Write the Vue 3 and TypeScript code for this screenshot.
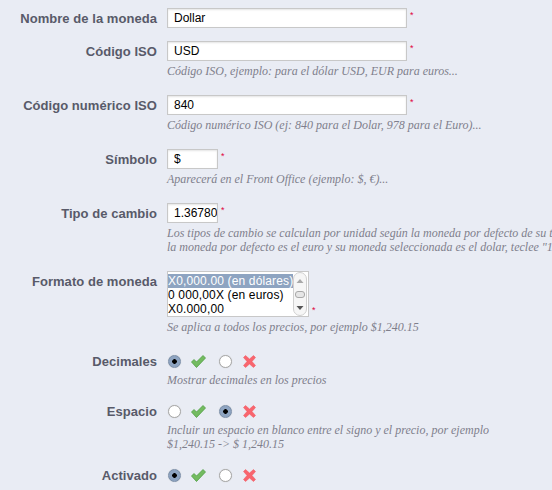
<script setup lang="ts">
interface Opcion {
  texto: string
  marcada: boolean
}

const formatos: Opcion[] = [
  { texto: 'X0,000.00 (en dólares)', marcada: true },
  { texto: '0 000,00X (en euros)', marcada: false },
  { texto: 'X0.000,00', marcada: false }
]

const puntosOk = '0.5,7 3,4.5 5.5,7 12,0.5 14.5,3 5.5,12.5'
const puntosNo = '2.5,0.5 6.5,4 10.5,0.5 12.5,2.5 9,6.5 12.5,10.5 10.5,12.5 6.5,9 2.5,12.5 0.5,10.5 4,6.5 0.5,2.5'
</script>

<template>
  <form class="form">
    <div class="fila">
      <label>Nombre de la moneda</label>
      <div class="campo">
        <input class="largo" type="text" value="Dollar" />
        <sup>*</sup>
      </div>
    </div>

    <div class="fila">
      <label>Código ISO</label>
      <div class="campo">
        <input class="largo" type="text" value="USD" />
        <sup>*</sup>
        <p class="ayuda">Código ISO, ejemplo: para el dólar USD, EUR para euros...</p>
      </div>
    </div>

    <div class="fila">
      <label>Código numérico ISO</label>
      <div class="campo">
        <input class="largo" type="text" value="840" />
        <sup>*</sup>
        <p class="ayuda">Código numérico ISO (ej: 840 para el Dolar, 978 para el Euro)...</p>
      </div>
    </div>

    <div class="fila">
      <label>Símbolo</label>
      <div class="campo">
        <input class="corto" type="text" value="$" />
        <sup>*</sup>
        <p class="ayuda">Aparecerá en el Front Office (ejemplo: $, €)...</p>
      </div>
    </div>

    <div class="fila">
      <label>Tipo de cambio</label>
      <div class="campo">
        <input class="corto" type="text" value="1.367800" />
        <sup>*</sup>
        <p class="ayuda">
          Los tipos de cambio se calculan por unidad según la moneda por defecto de su tienda. Por ejemplo, si<br />
          la moneda por defecto es el euro y su moneda seleccionada es el dolar, teclee "1,20"
        </p>
      </div>
    </div>

    <div class="fila">
      <label>Formato de moneda</label>
      <div class="campo">
        <div class="selector">
          <div class="lista">
            <div
              v-for="formato in formatos"
              :key="formato.texto"
              class="opcion"
              :class="{ marcada: formato.marcada }"
            >
              {{ formato.texto }}
            </div>
          </div>
          <div class="barra">
            <svg width="12" height="42" viewBox="0 0 12 42">
              <path d="M6 6 L9.5 10 H2.5 Z" fill="#a8a8a8" />
              <rect x="1.5" y="18.5" width="9" height="6" rx="2.5" fill="#e6e6e6" stroke="#a8a8a8" />
              <path d="M2.5 33 H9.5 L6 37 Z" fill="#555" />
            </svg>
          </div>
        </div>
        <sup class="sel">*</sup>
        <p class="ayuda ultima">Se aplica a todos los precios, por ejemplo $1,240.15</p>
      </div>
    </div>

    <div class="fila radios">
      <label>Decimales</label>
      <div class="campo">
        <div class="opciones">
          <span class="radio activo"></span>
          <svg class="ok" width="15" height="13" viewBox="0 0 15 13"><polygon :points="puntosOk" /></svg>
          <span class="radio"></span>
          <svg class="no" width="13" height="13" viewBox="0 0 13 13"><polygon :points="puntosNo" /></svg>
        </div>
        <p class="ayuda">Mostrar decimales en los precios</p>
      </div>
    </div>

    <div class="fila radios">
      <label>Espacio</label>
      <div class="campo">
        <div class="opciones">
          <span class="radio"></span>
          <svg class="ok" width="15" height="13" viewBox="0 0 15 13"><polygon :points="puntosOk" /></svg>
          <span class="radio activo"></span>
          <svg class="no" width="13" height="13" viewBox="0 0 13 13"><polygon :points="puntosNo" /></svg>
        </div>
        <p class="ayuda">
          Incluir un espacio en blanco entre el signo y el precio, por ejemplo<br />
          $1,240.15 -&gt; $ 1,240.15
        </p>
      </div>
    </div>

    <div class="fila radios">
      <label>Activado</label>
      <div class="campo">
        <div class="opciones">
          <span class="radio activo"></span>
          <svg class="ok" width="15" height="13" viewBox="0 0 15 13"><polygon :points="puntosOk" /></svg>
          <span class="radio"></span>
          <svg class="no" width="13" height="13" viewBox="0 0 13 13"><polygon :points="puntosNo" /></svg>
        </div>
      </div>
    </div>
  </form>
</template>

<style>
html,
body {
  margin: 0;
  height: 100%;
  overflow: hidden;
  background: #e9ecf4;
}
</style>

<style scoped>
.form {
  padding-top: 8px;
  width: 900px;
  font-family: "Liberation Sans", Arial, sans-serif;
  font-size: 13px;
  color: #000;
}

.fila {
  display: flex;
  margin-bottom: 12px;
}

.fila label {
  width: 157px;
  margin-right: 10px;
  padding-top: 1px;
  flex-shrink: 0;
  text-align: right;
  font-weight: bold;
  letter-spacing: 0.05px;
  color: #585a69;
  line-height: 20px;
}

.radios label {
  padding-top: 0;
  line-height: 18px;
}

.campo {
  flex: 1;
}

input {
  box-sizing: border-box;
  height: 20px;
  padding: 0 0 0 6px;
  border: 1px solid #c8c8c8;
  background: #fff;
  font-family: inherit;
  font-size: 12px;
  color: #000;
  vertical-align: top;
  box-shadow: inset 0 1px 2px #e4e4e4;
}

.largo {
  width: 240px;
}

.corto {
  width: 51px;
}

sup {
  margin-left: 3px;
  color: #e0003c;
  font-size: 9px;
  line-height: 14px;
  vertical-align: top;
}

sup.sel {
  vertical-align: bottom;
}

.ayuda {
  margin: 3px 0 0;
  padding-bottom: 5px;
  font-family: "Liberation Serif", Georgia, serif;
  font-style: italic;
  font-size: 12px;
  line-height: 14px;
  color: #7f7f8c;
  white-space: nowrap;
}

.ayuda.ultima {
  padding-bottom: 7px;
}

.radios .ayuda {
  margin-top: 4px;
  padding-bottom: 4px;
}

.selector {
  display: inline-flex;
  box-sizing: border-box;
  width: 142px;
  height: 46px;
  border: 1px solid #c8c8c8;
  background: #fff;
  vertical-align: bottom;
  overflow: hidden;
}

.lista {
  width: 125px;
  flex-shrink: 0;
  padding-top: 2px;
}

.opcion {
  height: 14px;
  line-height: 14px;
  font-size: 12px;
  letter-spacing: 0.15px;
  white-space: nowrap;
  overflow: hidden;
}

.opcion.marcada {
  background: #8ea4c1;
  color: #fff;
}

.barra {
  box-sizing: border-box;
  width: 14px;
  height: 44px;
  border: 1px solid #d0d0d0;
  border-radius: 7px;
  background: #f6f6f6;
}

.barra svg {
  display: block;
}

.opciones {
  display: flex;
  align-items: center;
  height: 16px;
  padding-left: 1px;
}

.radio {
  box-sizing: border-box;
  width: 13px;
  height: 13px;
  border: 1px solid #a8a8a8;
  border-radius: 50%;
  background: #fff;
  box-shadow: 0 0 1px #c0c0c0;
}

.radio.activo {
  border-color: #7a8ea8;
  background: radial-gradient(circle, #000 0 2px, #8ea4c1 2.6px);
}

.ok {
  margin: 0 13px 0 10px;
}

.ok polygon {
  fill: #73bb60;
  stroke: #4f9e42;
  stroke-width: 0.8;
}

.no {
  margin-left: 11px;
}

.no polygon {
  fill: #f8656e;
  stroke: #f0505a;
  stroke-width: 0.5;
}
</style>
